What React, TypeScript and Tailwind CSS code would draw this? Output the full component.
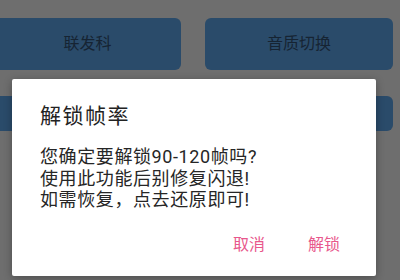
import React from "react";

const font = { fontFamily: "Roboto, 'Noto Sans CJK SC', sans-serif" };

export default function App() {
  return (
    <div className="relative w-[400px] h-[280px] overflow-hidden bg-[#6e6e6e]" style={font}>
      <div className="-ml-[6px] w-[412px] pt-[18px] flex flex-col gap-[26px]">
        <div className="grid grid-cols-[187px_188px] gap-[24px]">
          <div className="h-[52px] rounded-[6px] bg-[#2a4b6a] flex items-center justify-center text-[16px] text-[#162433]">
            联发科
          </div>
          <div className="h-[52px] rounded-[6px] bg-[#2a4b6a] flex items-center justify-center text-[16px] text-[#162433]">
            音质切换
          </div>
        </div>
        <div className="grid grid-cols-[187px_188px] gap-[24px]">
          <div className="h-[35px] rounded-[6px] bg-[#2a4b6a]" />
          <div className="h-[35px] rounded-[6px] bg-[#2a4b6a]" />
        </div>
      </div>

      <div className="absolute left-[12px] top-[79px] w-[364px] h-[197px] bg-white rounded-[2px] shadow-[0_2px_8px_rgba(0,0,0,0.3)] flex flex-col pt-[23px] pl-[28px] pr-[36px]">
        <div className="text-[21px] leading-[28px] tracking-[1.5px] text-[#222222]">解锁帧率</div>
        <div className="mt-[16px] text-[18px] leading-[21.5px] tracking-[0.6px] text-[#262626]">
          <div>您确定要解锁90-120帧吗?</div>
          <div>使用此功能后别修复闪退!</div>
          <div>如需恢复，点去还原即可!</div>
        </div>
        <div className="mt-[24px] flex justify-end gap-[43px] text-[16px] leading-[20px] text-[#e8578c]">
          <span>取消</span>
          <span>解锁</span>
        </div>
      </div>
    </div>
  );
}
